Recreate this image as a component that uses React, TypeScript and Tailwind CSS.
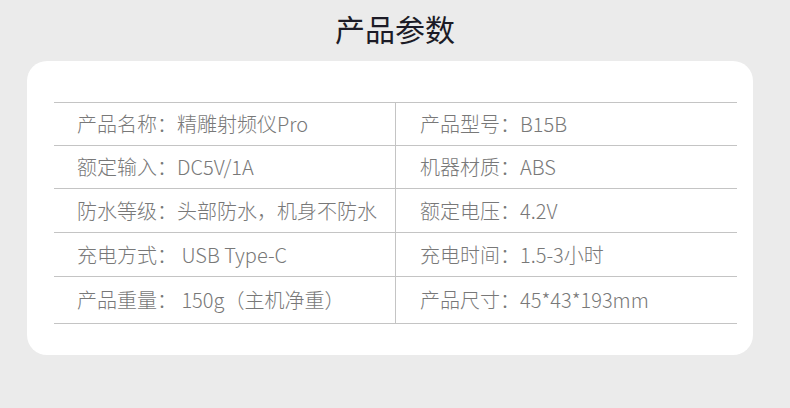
import React from "react";

const rows: { l: string; r: string; h: string }[] = [
  { l: "产品名称：精雕射频仪Pro", r: "产品型号：B15B", h: "h-[43px]" },
  { l: "额定输入：DC5V/1A", r: "机器材质：ABS", h: "h-[43px]" },
  { l: "防水等级：头部防水，机身不防水", r: "额定电压：4.2V", h: "h-[44px]" },
  { l: "充电方式： USB Type-C", r: "充电时间：1.5-3小时", h: "h-[44px]" },
  { l: "产品重量： 150g（主机净重）", r: "产品尺寸：45*43*193mm", h: "h-[47px]" },
];

export default function App() {
  return (
    <div
      className="w-[790px] h-[408px] bg-[#ebebeb] flex flex-col"
      style={{ fontFamily: '"Noto Sans CJK SC", "Noto Sans", sans-serif' }}
    >
      <div className="h-[61px] flex items-start justify-center pt-[9px]">
        <h1 className="text-[30px] leading-[38px] text-[#1c1b26] font-normal">产品参数</h1>
      </div>
      <div className="ml-[27px] w-[726px] h-[294px] rounded-[20px] bg-white pt-[41px] pl-[27px] pr-[16px]">
        <div className="w-[683px] border-t border-[#c4c4c4]">
          {rows.map((row, i) => (
            <div key={i} className={`flex ${row.h} border-b border-[#c4c4c4]`}>
              <div className="w-[342px] border-r border-[#c4c4c4] flex items-center pl-[23px] text-[20px] font-light text-[#787878] whitespace-pre">
                {row.l}
              </div>
              <div className="flex-1 flex items-center pl-[24px] text-[20px] font-light text-[#787878] whitespace-pre">
                {row.r}
              </div>
            </div>
          ))}
        </div>
      </div>
    </div>
  );
}
